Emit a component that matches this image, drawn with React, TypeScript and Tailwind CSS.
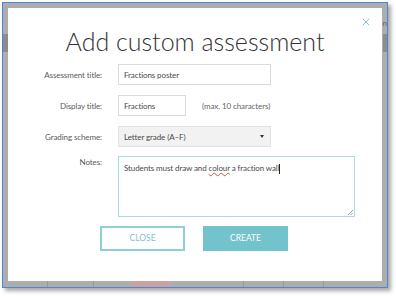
import { X } from "lucide-react";

const font = { fontFamily: 'Lato, "Open Sans", "Liberation Sans", sans-serif' };

const Label = ({ children }: { children: string }) => (
  <div className="w-[110px] shrink-0 text-right text-[8px] tracking-[-0.1px] leading-[12px] text-[#5a5a5a] pr-[16px]">{children}</div>
);

export default function App() {
  return (
    <div className="w-[396px] h-[296px] bg-white overflow-hidden" style={font}>
      <div className="relative ml-[2px] mt-[2px] w-[386px] h-[286px] border border-[#4b87d2] bg-[#adadad] shadow-[3px_3px_4px_rgba(0,0,0,0.35)] p-[5px] pb-[6px]">
        {/* faint page behind the modal */}
        <div className="absolute left-0 top-[31px] w-[6px] h-[18px] bg-[#8c8c8c]" />
        <div className="absolute right-0 top-[31px] w-[4px] h-[18px] bg-[#8c8c8c]" />
        <div className="absolute right-0 top-[16px] text-[8px] text-[#666] leading-none">n</div>
        <div className="absolute left-[128px] bottom-0 w-[40px] h-[6px] bg-[#c9a3a3]" />
        <div className="absolute left-[44px] bottom-0 w-px h-[6px] bg-[#999]" />
        <div className="absolute left-[90px] bottom-0 w-px h-[6px] bg-[#999]" />
        <div className="absolute left-[240px] bottom-0 w-px h-[6px] bg-[#999]" />
        <div className="absolute left-[280px] bottom-0 w-px h-[6px] bg-[#999]" />
        <div className="absolute left-[320px] bottom-0 w-px h-[6px] bg-[#999]" />

        <div className="relative h-full bg-white">
          <X className="absolute right-[10px] top-[8px] w-[12px] h-[12px] text-[#6cc4ce]" strokeWidth={1.75} />
          <h1 className="pt-[18px] text-center text-[25px] leading-[30px] font-light text-[#333]">
            Add custom assessment
          </h1>

          <div className="mt-[8px] flex flex-col gap-[10px] text-[8px] tracking-[-0.1px] text-[#4a4a4a]">
            <div className="flex items-center">
              <Label>Assessment title:</Label>
              <div className="w-[153px] h-[21px] border border-[#dcdcdc] px-[5px] flex items-center">
                Fractions poster
              </div>
            </div>
            <div className="flex items-center">
              <Label>Display title:</Label>
              <div className="w-[68px] h-[21px] border border-[#dcdcdc] px-[5px] flex items-center">
                Fractions
              </div>
              <span className="ml-[16px] text-[#666]">(max. 10 characters)</span>
            </div>
            <div className="flex items-center">
              <Label>Grading scheme:</Label>
              <div className="w-[153px] h-[21px] border border-[#e2e2e2] bg-[#f2f2f2] px-[5px] flex items-center justify-between">
                <span>Letter grade (A–F)</span>
                <span className="w-0 h-0 border-l-[2px] border-r-[2px] border-t-[3px] border-l-transparent border-r-transparent border-t-[#333] mr-[1px]" />
              </div>
            </div>
            <div className="flex items-start -mt-[1px]">
              <Label>Notes:</Label>
              <div className="relative w-[237px] h-[61px] border border-[#a9dcdc] px-[5px] pt-[5px] leading-[12px]">
                Students must draw and{" "}
                <span className="underline decoration-wavy decoration-[#e04848] decoration-[1px]">colour</span> a fraction
                wall<span className="inline-block w-px h-[10px] bg-[#222] align-middle" />
                <svg className="absolute right-[1px] bottom-[1px] w-[6px] h-[6px]" viewBox="0 0 6 6">
                  <path d="M1 6 L6 1 M3.5 6 L6 3.5" stroke="#888" strokeWidth="0.8" />
                </svg>
              </div>
            </div>
          </div>

          <div className="mt-[9px] flex justify-center gap-[18px] pr-[2px]">
            <button className="w-[85px] h-[25px] border-2 border-[#8fd0d6] bg-white text-[8.5px] text-[#7cc6cf]">
              CLOSE
            </button>
            <button className="w-[85px] h-[25px] bg-[#72c3cc] text-[8.5px] text-white">CREATE</button>
          </div>
        </div>
      </div>
    </div>
  );
}
